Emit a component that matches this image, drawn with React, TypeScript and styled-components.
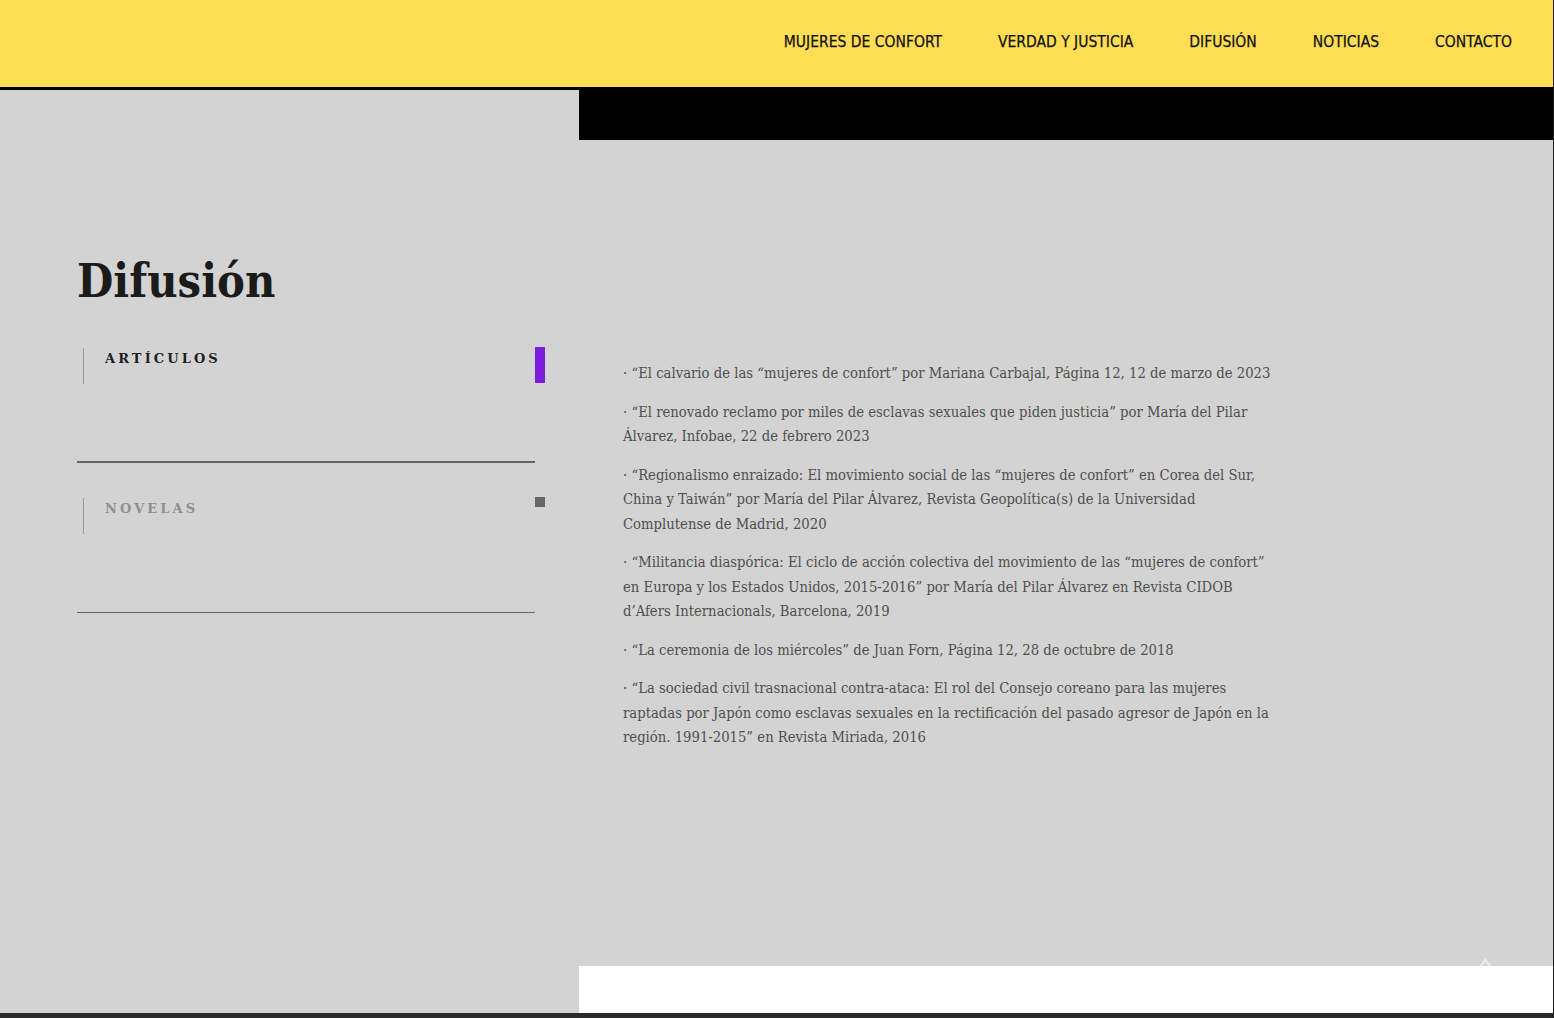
import React, { useState } from "react";
import styled, { createGlobalStyle } from "styled-components";

const Global = createGlobalStyle`
  html, body { margin: 0; padding: 0; background: #d3d3d3; }
  body { overflow: hidden; }
  * { box-sizing: border-box; }
`;

const Page = styled.div`
  width: 1554px;
  height: 1018px;
  display: flex;
  flex-direction: column;
  border-right: 1px solid #1c1c1c;
  background: #d3d3d3;
  overflow: hidden;
`;

const Header = styled.header`
  height: 90px;
  flex: none;
  background: #ffde55;
  border-bottom: 3px solid #000;
  display: flex;
  justify-content: flex-end;
  align-items: flex-start;
  padding: 32px 41px 0 0;
`;

const Nav = styled.nav`
  display: flex;
  gap: 56px;
`;

const NavLink = styled.a`
  font-family: "Liberation Sans Narrow", "DejaVu Sans Condensed", "Liberation Sans", sans-serif;
  font-size: 15.5px;
  line-height: 20px;
  color: #111;
  text-decoration: none;
  white-space: nowrap;
  -webkit-text-stroke: 0.25px #111;
`;

const Main = styled.main`
  flex: 1;
  display: grid;
  grid-template-columns: 579px 1fr;
`;

const Side = styled.aside`
  padding: 162px 0 0 77px;
`;

const Title = styled.h1`
  margin: 0 0 38px 0;
  font-family: "DejaVu Serif", serif;
  font-stretch: condensed;
  font-weight: 700;
  font-size: 46.5px;
  line-height: 58px;
  color: #1b1b1b;
`;

const TabList = styled.div`
  width: 468px;
  display: flex;
  flex-direction: column;
  gap: 35px;
`;

const TabItem = styled.div<{ $active: boolean }>`
  width: 458px;
  height: 115px;
  border-bottom: ${(p) => (p.$active ? "2px solid #666" : "1px solid #666")};
`;

const TabHead = styled.button<{ $active: boolean }>`
  all: unset;
  box-sizing: border-box;
  cursor: pointer;
  position: relative;
  display: flex;
  align-items: flex-start;
  width: 462px;
  height: 36px;
  margin-left: 6px;
  padding: 3px 0 0 21px;
  border-left: 1px solid #9a9a9a;
  font-family: "DejaVu Serif", serif;
  font-weight: 700;
  font-size: 13px;
  letter-spacing: 3.1px;
  line-height: 16px;
  color: ${(p) => (p.$active ? "#1e1e1e" : "#8f8f8f")};
  text-transform: uppercase;
`;

const Marker = styled.span<{ $active: boolean }>`
  position: absolute;
  right: 0;
  top: -1px;
  width: 10px;
  height: ${(p) => (p.$active ? "36px" : "10px")};
  background: ${(p) => (p.$active ? "#7d1ddc" : "#666")};
`;

const Content = styled.section`
  position: relative;
  display: flex;
  flex-direction: column;
`;

const BlackBar = styled.div`
  height: 50px;
  background: #000;
  flex: none;
`;

const Articles = styled.div`
  flex: 1;
  padding: 221px 0 0 44px;
  max-width: 704px;
  display: flex;
  flex-direction: column;
  gap: 14px;
`;

const Item = styled.p`
  margin: 0;
  font-family: "DejaVu Serif", serif;
  font-stretch: condensed;
  font-size: 14.7px;
  line-height: 24.5px;
  color: #4f4f4f;
`;

const WhiteBlock = styled.div`
  position: relative;
  z-index: 1;
  height: 47px;
  background: #fff;
  flex: none;
`;

const TopArrow = styled.svg`
  position: absolute;
  right: 60px;
  bottom: 44px;
  width: 15px;
  height: 12px;
`;

const Footer = styled.footer`
  height: 5px;
  flex: none;
  background: #2a2a2a;
`;

const links = ["MUJERES DE CONFORT", "VERDAD Y JUSTICIA", "DIFUSIÓN", "NOTICIAS", "CONTACTO"];

const articles = [
  "· “El calvario de las “mujeres de confort” por Mariana Carbajal, Página 12, 12 de marzo de 2023",
  "· “El renovado reclamo por miles de esclavas sexuales que piden justicia” por María del Pilar Álvarez, Infobae, 22 de febrero 2023",
  "· “Regionalismo enraizado: El movimiento social de las “mujeres de confort” en Corea del Sur, China y Taiwán” por María del Pilar Álvarez, Revista Geopolítica(s) de la Universidad Complutense de Madrid, 2020",
  "· “Militancia diaspórica: El ciclo de acción colectiva del movimiento de las “mujeres de confort” en Europa y los Estados Unidos, 2015-2016” por María del Pilar Álvarez en Revista CIDOB d’Afers Internacionals, Barcelona, 2019",
  "· “La ceremonia de los miércoles” de Juan Forn, Página 12, 28 de octubre de 2018",
  "· “La sociedad civil trasnacional contra-ataca: El rol del Consejo coreano para las mujeres raptadas por Japón como esclavas sexuales en la rectificación del pasado agresor de Japón en la región. 1991-2015” en Revista Miriada, 2016",
];

export default function App() {
  const [active, setActive] = useState(0);
  const tabs = ["Artículos", "Novelas"];
  return (
    <>
      <Global />
      <Page>
        <Header>
          <Nav>
            {links.map((l) => (
              <NavLink key={l} href="#">
                {l}
              </NavLink>
            ))}
          </Nav>
        </Header>
        <Main>
          <Side>
            <Title>Difusión</Title>
            <TabList>
              {tabs.map((t, i) => (
                <TabItem key={t} $active={i === active}>
                  <TabHead $active={i === active} onClick={() => setActive(i)}>
                    {t}
                    <Marker $active={i === active} />
                  </TabHead>
                </TabItem>
              ))}
            </TabList>
          </Side>
          <Content>
            <BlackBar />
            <Articles>
              {articles.map((a) => (
                <Item key={a}>{a}</Item>
              ))}
            </Articles>
            <TopArrow viewBox="0 0 15 12">
              <path d="M1.5 11 L7.5 3 L13.5 11" fill="none" stroke="#ececec" strokeWidth="2.5" />
            </TopArrow>
            <WhiteBlock />
          </Content>
        </Main>
        <Footer />
      </Page>
    </>
  );
}
